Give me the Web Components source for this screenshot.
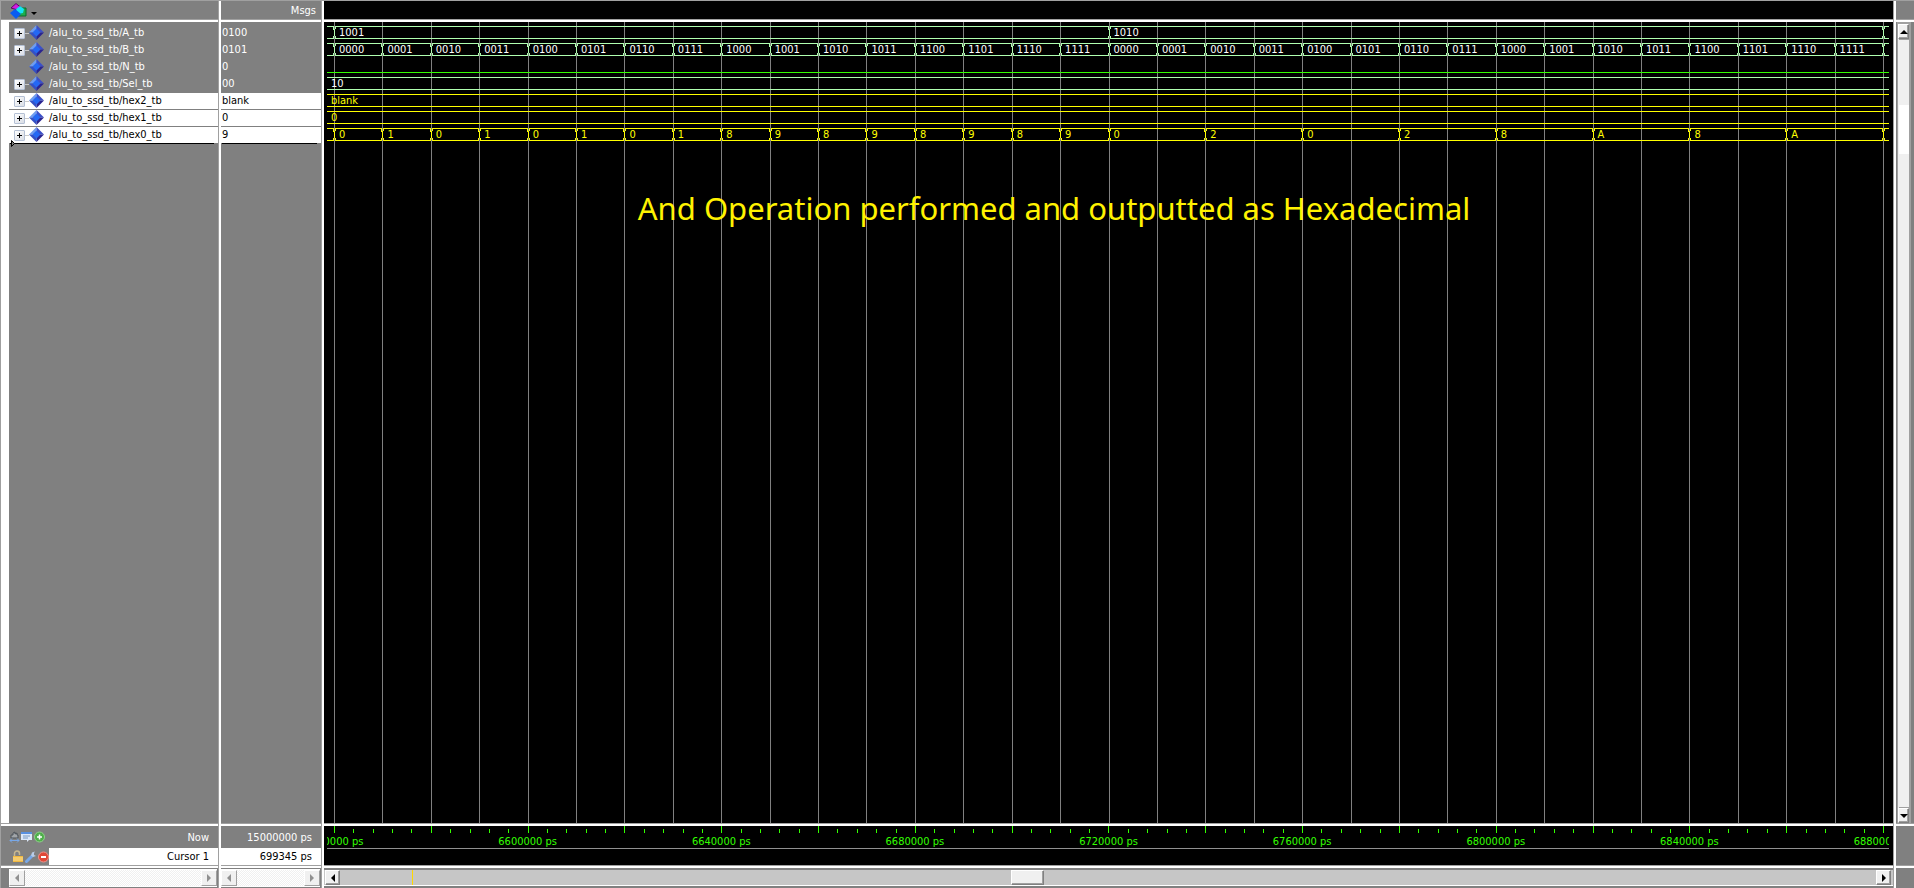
<!DOCTYPE html>
<html lang="en">
<head>
<meta charset="utf-8">
<title>Wave</title>
<style>
  html, body { height: 100%; }
  body {
    margin: 0; background: #808080; overflow: hidden;
    font-family: "DejaVu Sans Condensed", "DejaVu Sans", sans-serif;
    font-size: 11px; line-height: 14px;
  }
</style>
</head>
<body>
<wave-window></wave-window>

<script>
const define = (name, html, setup) => {
  const template = document.createElement('template');
  template.innerHTML = html;
  customElements.define(name, class extends HTMLElement {
    constructor() {
      super();
      this.attachShadow({ mode: 'open' }).append(template.content.cloneNode(true));
    }
    connectedCallback() {
      if (this.ready) return;
      this.ready = true;
      if (setup) setup(this, this.shadowRoot);
    }
  });
};

/* A column of the window: header, body, footer and scroll strip, split by sashes. */
define('split-pane', `
<style>
  :host { display: grid; grid-template-rows: 18px 3px minmax(0, 1fr) 3px 39px 3px 20px; min-width: 0; box-sizing: border-box;
    border-top: 1px solid #a0a0a0; background: #808080; color: #fff; }
  :host([dark]) .ink { background: #000; }
  .cell { min-width: 0; min-height: 0; position: relative; display: grid; }
  .sash { background: linear-gradient(#a0a0a0 1px, #fff 1px); }
</style>
<div class="cell ink"><slot name="header"></slot></div>
<div class="sash"></div>
<div class="cell ink"><slot name="body"></slot></div>
<div class="sash"></div>
<div class="cell ink"><slot name="footer"></slot></div>
<div class="sash"></div>
<div class="cell"><slot name="scroll"></slot></div>`);

/* Square scroll arrow. */
define('arrow-button', `
<style>
  :host { display: block; width: 16px; height: 16px; flex: none; }
  button { display: block; width: 100%; height: 100%; padding: 0; background: #f0f0f0; border: 1px solid;
    border-color: #fff #808080 #808080 #fff; box-shadow: inset -1px -1px #a0a0a0; color: #000; }
  :host([off]) button { color: #909090; border-color: #fff #a0a0a0 #a0a0a0 #fff; box-shadow: none; }
  svg { display: block; margin: auto; }
  :host([dir=right]) svg { transform: rotate(180deg); }
  :host([dir=up]) svg { transform: rotate(90deg); }
  :host([dir=down]) svg { transform: rotate(-90deg); }
</style>
<button type="button"><svg width="8" height="8" viewBox="0 0 8 8" fill="currentColor"><path d="M6 0v8L2 4z"/></svg></button>`,
(host, root) => {
  root.querySelector('button').setAttribute('aria-label', 'Scroll ' + host.getAttribute('dir'));
});

/* Horizontal bar of the name and value panes: nothing to scroll. */
define('idle-scrollbar', `
<style>
  :host { display: flex; height: 16px; margin: 1px 1px 0 0; border-top: 1px solid #fff; border-bottom: 1px solid #fff; background:
    repeating-conic-gradient(#fff 0 25%, #f0f0f0 0 50%) 0 0 / 2px 2px; justify-content: space-between; }
</style>
<arrow-button dir="left" off></arrow-button><arrow-button dir="right" off></arrow-button>`);

define('time-scrollbar', `
<style>
  :host { display: flex; height: 15px; border-top: 2px solid #808080; border-bottom: 1px solid #fff; background: #c6c6c6; padding: 0 2px 0 1px; margin-bottom: 2px; }
  .track { flex: 1; position: relative; }
  .thumb { position: absolute; left: 43.7%; top: 0; width: 33px; height: 15px; box-sizing: border-box; background: #f0f0f0;
    border: 1px solid; border-color: #fff #808080 #808080 #fff; box-shadow: inset -1px -1px #a0a0a0; }
  .mark { position: absolute; left: 4.7%; top: 0; width: 1px; height: 15px; background: #ffd800; }
  arrow-button { height: 15px; width: 15px; }
</style>
<arrow-button dir="left"></arrow-button>
<div class="track"><div class="mark"></div><div class="thumb"></div></div>
<arrow-button dir="right"></arrow-button>`);

define('signal-scrollbar', `
<style>
  :host { display: flex; flex-direction: column; border: solid #a0a0a0; border-width: 2px 2px 0 1px; margin: 0 3px 0 1px; background: #f0f0f0; }
  .track { flex: 1; border-top: 1px solid #a0a0a0; border-bottom: 1px solid #a0a0a0; position: relative; margin-left: 1px; }
  .thumb { position: absolute; top: 9%; left: 0; right: 0; margin-top: -4px; height: 49px; background: #fff; }
  arrow-button { width: auto; height: 15px; }
</style>
<arrow-button dir="up"></arrow-button>
<div class="track"><div class="thumb"></div></div>
<arrow-button dir="down"></arrow-button>`);

define('wave-logo', `
<style>
  :host { display: flex; align-items: flex-start; padding: 2px 0 0 9px; }
  button { display: flex; gap: 4px; padding: 0; border: 0; background: none; }
  svg { display: block; }
</style>
<button type="button" aria-label="Wave menu">
  <svg width="17" height="16" viewBox="0 0 17 16">
    <path d="M10 5h6v8H8z" fill="#1cae4c" stroke="#0b6a2c"/>
    <path d="M1 5l5-4.500 5 4-5 2z" fill="#d21be0" stroke="#5b0a66"/>
    <path d="M6 6l4-3 4 3-1 4-5 1z" fill="#12e4f4"/>
    <path d="M0 10l5-4 6 5-5 5z" fill="#0a5cf0"/>
  </svg>
  <svg width="6" height="16" viewBox="0 0 6 16"><path d="M0 9h6L3 12z"/></svg>
</button>`);

define('signal-row', `
<style>
  :host { display: flex; align-items: flex-start; height: 17px; padding-left: 5px; box-sizing: border-box; color: #fff; }
  :host([lit]) { background: #fff; color: #000; border-bottom: 1px solid #808080; }
  button { width: 11px; height: 11px; margin-top: 3px; padding: 0; border: 1px solid #b4c0d4; border-radius: 1px; flex: none;
    background: linear-gradient(135deg, #fff, #d8dce4); }
  :host([leaf]) button, :host([leaf]) .link { visibility: hidden; }
  svg { display: block; flex: none; }
  .link { width: 4px; height: 1px; margin-top: 8px; background: #c8c8c8; flex: none; }
  .name { margin-left: 5px; padding-top: 1px; white-space: nowrap; }
</style>
<button type="button" aria-label="Expand"><svg width="9" height="9" viewBox="0 0 9 9" stroke="#000"><path d="M2 4.500h5M4.500 2v5"/></svg></button>
<span class="link"></span>
<svg width="15" height="15" viewBox="0 0 15 15">
  <path d="M7.500 0L0 7.500h7.500z" fill="#6f9cf0"/><path d="M7.500 0L15 7.500H7.500z" fill="#3c50c8"/>
  <path d="M0 7.500L7.500 15V7.500z" fill="#3450c4"/><path d="M15 7.500L7.500 15V7.500z" fill="#2a2490"/>
  <path d="M7.500 3.500l4 4-4 4-4-4z" fill="#2468f4"/>
</svg>
<span class="name"><slot></slot></span>`);

define('value-row', `
<style>
  :host { display: block; height: 17px; padding: 1px 0 0 1px; box-sizing: border-box; color: #fff; white-space: nowrap; }
  :host([lit]) { background: #fff; color: #000; border-bottom: 1px solid #808080; }
</style><slot></slot>`);

define('row-list', `
<style>
  :host { display: block; padding-top: 3px; position: relative; }
  :host([strip]) { border-left: 8px solid #fff; }
  .end { height: 1px; margin: -1px 4px 0 1px; background: #000; }
  svg { position: absolute; left: 2px; top: 118px; display: none; }
  :host([strip]) svg { display: block; }
</style>
<slot></slot><div class="end"></div>
<svg width="4" height="7" viewBox="0 0 4 7"><path d="M.5 .5v6l3-3z" fill="#808080" stroke="#000"/></svg>`);

define('cursor-names', `
<style>
  :host { display: grid; grid-template-rows: 22px 17px; }
  div { display: flex; }
  .icons { box-sizing: border-box; gap: 1px; flex: none; align-items: center; padding-left: 8px; }
  .cur .icons { width: 48px; padding-left: 11px; }
  button { padding: 0; border: 0; background: none; display: block; flex: none; }
  svg { display: block; }
  .text { flex: 1; justify-content: flex-end; padding-right: 9px; align-items: center; }
  .now .text { padding-top: 1px; }
  .cur .text { background: #fff; color: #000; }
</style>
<div class="now">
  <div class="icons">
    <button type="button" aria-label="Configure grid"><svg width="11" height="12" viewBox="0 0 11 12"><path d="M2 4h2V2l2-1v2l2-1v2h1v3H2z" fill="#a0a4a8" stroke="#4c5258"/><path d="M1 9.500h9M1 9.500l2-2M1 9.500l2 2M10 9.500l-2-2M10 9.500l-2 2" stroke="#78a8e8" fill="none"/></svg></button>
    <button type="button" aria-label="Edit properties"><svg width="12" height="12" viewBox="0 0 12 12"><path d="M0 1h11v8H8l-2 2V9H0z" fill="#dce8f8"/><path d="M0 1h11v2H0z" fill="#5890e0"/><path d="M2 5h7M2 7h5" stroke="#7898c0"/></svg></button>
    <button type="button" aria-label="Add cursor"><svg width="11" height="12" viewBox="0 0 11 12"><circle cx="5.500" cy="6" r="5" fill="#4fae4a" stroke="#8fd08a"/><path d="M3 6h5M5.500 3.500v5" stroke="#fff" stroke-width="1.500"/></svg></button>
  </div>
  <div class="text">Now</div>
</div>
<div class="cur">
  <div class="icons">
    <button type="button" aria-label="Lock cursor"><svg width="12" height="13" viewBox="0 0 12 13"><path d="M2.500 6V3.500a2.500 2.500 0 015 0V5" fill="none" stroke="#c8b890" stroke-width="1.500"/><path d="M1 6h10v6H1z" fill="#f0b840"/><path d="M1 8h10M1 10h10" stroke="#fbe09a"/></svg></button>
    <button type="button" aria-label="Cursor settings"><svg width="12" height="12" viewBox="0 0 12 12"><path d="M1.500 10.500L7 5" stroke="#78a8e8" stroke-width="3" stroke-linecap="round"/><path d="M7 1.500L6 4.500 8 6l3-1-2-1V2l1-1.500z" fill="#b8cce8"/></svg></button>
    <button type="button" aria-label="Delete cursor"><svg width="11" height="12" viewBox="0 0 11 12"><circle cx="5.500" cy="6" r="5" fill="#e04838" stroke="#f09088"/><path d="M3 6h5" stroke="#fff" stroke-width="2"/></svg></button>
  </div>
  <div class="text">Cursor 1</div>
</div>`);

define('cursor-values', `
<style>
  :host { display: grid; grid-template-rows: 22px 17px; }
  div { display: flex; justify-content: flex-end; align-items: center; padding: 1px 9px 0 0; }
  div + div { padding-top: 0; background: #fff; color: #000; }
</style>
<div>15000000 ps</div><div>699345 ps</div>`);

/* One bus: data-values is "text*columns" parts; each change draws a crossing. */
define('bus-lane', `
<style>
  :host { display: grid; grid-template-columns: 7px repeat(32, minmax(0, 1fr)) 6px; height: 13px; margin-bottom: 4px; box-sizing: border-box;
    border: solid var(--trace); border-width: 1px 0; color: var(--label); line-height: 12px; white-space: nowrap; }
  .seg { position: relative; padding-left: 5px; }
  .seg::before { content: ""; position: absolute; left: -1px; top: -1px; width: 3px; height: 13px;
    background:
      linear-gradient(var(--trace), var(--trace)) 0 0 / 1px 4px no-repeat,
      linear-gradient(var(--trace), var(--trace)) 2px 0 / 1px 3px no-repeat,
      linear-gradient(var(--trace), var(--trace)) 0 100% / 1px 3px no-repeat,
      linear-gradient(var(--trace), var(--trace)) 2px 100% / 1px 3px no-repeat,
      linear-gradient(var(--trace), var(--trace)) 1px 3px / 1px 7px no-repeat,
      linear-gradient(#808080, #808080) 1px 0 / 1px 13px no-repeat; }
  .steady { grid-column: 1 / -1; padding-left: 4px; }
</style>`,
(host, root) => {
  const spec = host.dataset.values.split(' ');
  if (spec.length === 1) {
    const d = document.createElement('div');
    d.className = 'steady';
    d.textContent = spec[0];
    root.append(d);
    return;
  }
  let col = 2;
  for (const part of spec.concat('*1')) {
    const [text, span = 1] = part.split('*');
    const d = document.createElement('div');
    d.className = 'seg';
    d.style.gridColumn = `${col} / span ${span}`;
    d.textContent = text;
    root.append(d);
    col += +span;
  }
});

/* The second operand counts through every 4-bit value twice. */
const counter = Array.from({ length: 32 }, (_, i) => (i % 16).toString(2).padStart(4, '0')).join(' ');

define('wave-canvas', `
<style>
  :host { display: grid; grid-template-columns: minmax(0, 1fr); padding: 0 4px 0 3px; position: relative; }
  .grid, .lanes { grid-area: 1 / 1; }
  .grid { display: grid; grid-template-columns: 7px repeat(32, minmax(0, 1fr)) 6px; }
  .grid i { border-left: 1px solid #808080; }
  .grid i:first-child { border: 0; }
  .lanes { padding-top: 4px; position: relative; --trace: #b0ffb0; --label: #fff; }
  .level { height: 13px; box-sizing: border-box; border-bottom: 1px solid #33ff00; margin-bottom: 4px; }
  .hex { --trace: #ff0; --label: #ff0; }
  .note { position: absolute; left: 20%; top: 164px; margin: 0; color: #fff200; white-space: nowrap;
    font: 31px/44px "Noto Sans", "Open Sans", sans-serif; }
</style>
<div class="grid">${'<i></i>'.repeat(34)}</div>
<div class="lanes">
  <bus-lane data-values="1001*16 1010*16"></bus-lane>
  <bus-lane data-values="${counter}"></bus-lane>
  <div class="level"></div>
  <bus-lane data-values="10"></bus-lane>
  <bus-lane class="hex" data-values="blank"></bus-lane>
  <bus-lane class="hex" data-values="0"></bus-lane>
  <bus-lane class="hex" data-values="0 1 0 1 0 1 0 1 8 9 8 9 8 9 8 9 0*2 2*2 0*2 2*2 8*2 A*2 8*2 A*2"></bus-lane>
</div>
<p class="note">And Operation performed and outputted as Hexadecimal</p>`);

define('time-ruler', `
<style>
  :host { display: grid; grid-template-rows: 7px 16px 16px; grid-template-columns: minmax(0, 1fr); padding: 0 4px 0 3px; color: #33ff00; }
  .ticks { display: grid; grid-template-columns: 7px repeat(80, minmax(0, 1fr)) 6px; align-items: end; }
  .ticks i { border-left: 1px solid #33ff00; height: 4px; }
  .ticks i:nth-child(5n+2) { height: 7px; }
  .ticks i:first-child { border: 0; }
  .view { overflow: hidden; border-bottom: 1px solid #909090; padding: 0 6px 0 7px; }
  .labels { display: flex; margin: 3px -6.25% 0; line-height: 12px; }
  .labels span { flex: 1 0 0; text-align: center; white-space: nowrap; }
</style>
<div class="ticks">${'<i></i>'.repeat(82)}</div>
<div class="view"><div class="labels"></div></div>`,
(host, root) => {
  for (let t = 6560000; t <= 6880000; t += 40000) {
    const s = document.createElement('span');
    s.textContent = t + ' ps';
    root.querySelector('.labels').append(s);
  }
});

define('wave-window', `
<style>
  :host { display: grid; height: 100vh; grid-template-columns: 221px 103px minmax(0, 1fr) 18px; background: #808080; }
  .sashed { border-right: 3px solid #fff; border-image: linear-gradient(90deg, #a0a0a0 1px, #fff 1px) 1; }
  .sashed { border-image: none; border-right: 0; padding-right: 3px;
    background: linear-gradient(90deg, #a0a0a0 1px, #fff 1px) 100% 0 / 3px 100% no-repeat #808080; }
  .names { border-left: 1px solid #a0a0a0; }
  .title { text-align: right; padding: 3px 5px 0 0; }
  .pad { margin-left: 8px; }
</style>
<split-pane class="names sashed">
  <wave-logo slot="header"></wave-logo>
  <row-list slot="body" strip>
    <signal-row>/alu_to_ssd_tb/A_tb</signal-row>
    <signal-row>/alu_to_ssd_tb/B_tb</signal-row>
    <signal-row leaf>/alu_to_ssd_tb/N_tb</signal-row>
    <signal-row>/alu_to_ssd_tb/Sel_tb</signal-row>
    <signal-row lit>/alu_to_ssd_tb/hex2_tb</signal-row>
    <signal-row lit>/alu_to_ssd_tb/hex1_tb</signal-row>
    <signal-row lit>/alu_to_ssd_tb/hex0_tb</signal-row>
  </row-list>
  <cursor-names slot="footer"></cursor-names>
  <idle-scrollbar slot="scroll" class="pad"></idle-scrollbar>
</split-pane>
<split-pane class="sashed">
  <div slot="header" class="title">Msgs</div>
  <row-list slot="body">
    <value-row>0100</value-row><value-row>0101</value-row><value-row>0</value-row><value-row>00</value-row>
    <value-row lit>blank</value-row><value-row lit>0</value-row><value-row lit>9</value-row>
  </row-list>
  <cursor-values slot="footer"></cursor-values>
  <idle-scrollbar slot="scroll"></idle-scrollbar>
</split-pane>
<split-pane class="sashed" dark>
  <wave-canvas slot="body"></wave-canvas>
  <time-ruler slot="footer"></time-ruler>
  <time-scrollbar slot="scroll"></time-scrollbar>
</split-pane>
<split-pane>
  <signal-scrollbar slot="body"></signal-scrollbar>
</split-pane>`);
</script>
</body>
</html>
